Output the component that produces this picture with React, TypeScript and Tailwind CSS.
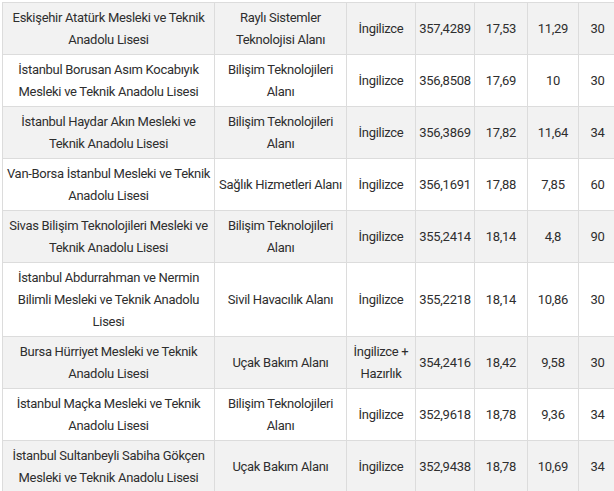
import React from 'react';

type Row = {
  school: string;
  field: string;
  lang: string;
  score: string;
  pct: string;
  dil: string;
  quota: string;
};

const rows: Row[] = [
  { school: 'Eskişehir Atatürk Mesleki ve Teknik Anadolu Lisesi', field: 'Raylı Sistemler Teknolojisi Alanı', lang: 'İngilizce', score: '357,4289', pct: '17,53', dil: '11,29', quota: '30' },
  { school: 'İstanbul Borusan Asım Kocabıyık Mesleki ve Teknik Anadolu Lisesi', field: 'Bilişim Teknolojileri Alanı', lang: 'İngilizce', score: '356,8508', pct: '17,69', dil: '10', quota: '30' },
  { school: 'İstanbul Haydar Akın Mesleki ve Teknik Anadolu Lisesi', field: 'Bilişim Teknolojileri Alanı', lang: 'İngilizce', score: '356,3869', pct: '17,82', dil: '11,64', quota: '34' },
  { school: 'Van-Borsa İstanbul Mesleki ve Teknik Anadolu Lisesi', field: 'Sağlık Hizmetleri Alanı', lang: 'İngilizce', score: '356,1691', pct: '17,88', dil: '7,85', quota: '60' },
  { school: 'Sivas Bilişim Teknolojileri Mesleki ve Teknik Anadolu Lisesi', field: 'Bilişim Teknolojileri Alanı', lang: 'İngilizce', score: '355,2414', pct: '18,14', dil: '4,8', quota: '90' },
  { school: 'İstanbul Abdurrahman ve Nermin Bilimli Mesleki ve Teknik Anadolu Lisesi', field: 'Sivil Havacılık Alanı', lang: 'İngilizce', score: '355,2218', pct: '18,14', dil: '10,86', quota: '30' },
  { school: 'Bursa Hürriyet Mesleki ve Teknik Anadolu Lisesi', field: 'Uçak Bakım Alanı', lang: 'İngilizce + Hazırlık', score: '354,2416', pct: '18,42', dil: '9,58', quota: '30' },
  { school: 'İstanbul Maçka Mesleki ve Teknik Anadolu Lisesi', field: 'Bilişim Teknolojileri Alanı', lang: 'İngilizce', score: '352,9618', pct: '18,78', dil: '9,36', quota: '34' },
  { school: 'İstanbul Sultanbeyli Sabiha Gökçen Mesleki ve Teknik Anadolu Lisesi', field: 'Uçak Bakım Alanı', lang: 'İngilizce', score: '352,9438', pct: '18,78', dil: '10,69', quota: '34' },
  { school: '', field: '', lang: '', score: '', pct: '', dil: '', quota: '' },
];

export default function App() {
  return (
    <div className="w-[614px] h-[491px] overflow-hidden bg-white pl-[2px] pt-[2px]">
      <table
        className="table-fixed border-collapse w-[614px] text-[13px] tracking-[-0.3px] leading-[22px] text-[#2e2e2e] text-center"
        style={{ fontFamily: 'Roboto, "Liberation Sans", sans-serif' }}
      >
        <colgroup>
          <col className="w-[212px]" />
          <col className="w-[132px]" />
          <col className="w-[69px]" />
          <col className="w-[59px]" />
          <col className="w-[53px]" />
          <col className="w-[51px]" />
          <col className="w-[38px]" />
        </colgroup>
        <tbody>
          {rows.map((r, i) => (
            <tr key={i} className={i % 2 === 0 ? 'bg-[#f2f2f2]' : 'bg-white'}>
              {[r.school, r.field, r.lang, r.score, r.pct, r.dil, r.quota].map((c, j) => (
                <td
                  key={j}
                  className="border border-[#dcdcdc] px-[3px] pt-[4px] pb-[3px] align-middle"
                >
                  {c}
                </td>
              ))}
            </tr>
          ))}
        </tbody>
      </table>
    </div>
  );
}
